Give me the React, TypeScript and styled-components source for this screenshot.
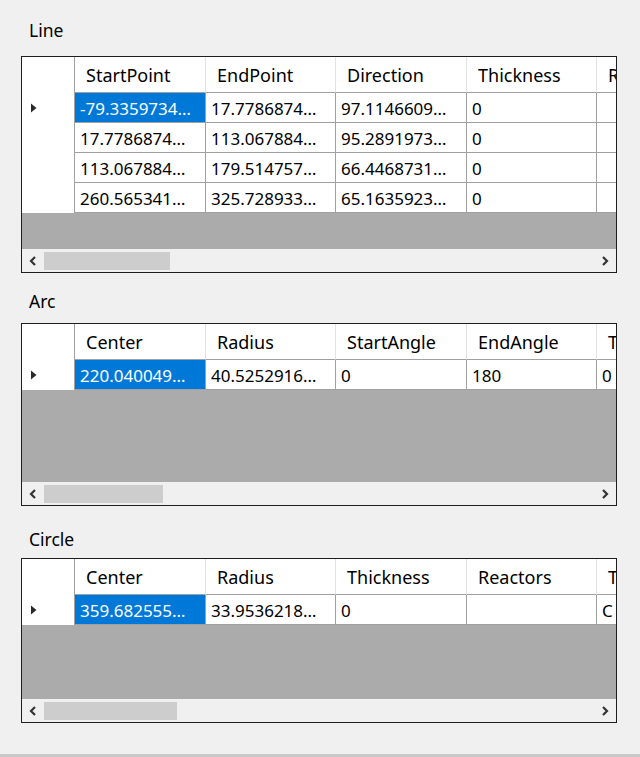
import React from 'react';
import styled, { createGlobalStyle } from 'styled-components';

const GlobalStyle = createGlobalStyle`
  html, body {
    margin: 0;
    padding: 0;
    background: #f0f0f0;
  }
  body {
    font-family: 'Noto Sans', 'Open Sans', Arial, sans-serif;
    color: #000;
  }
`;

type Table = {
  title: string;
  columns: string[];
  rows: string[][];
  emptyHeight: number;
  thumbWidth: number;
  top: number;
  gap: number;
};

const widths = [131, 130, 131, 130, 40];

const tables: Table[] = [
  {
    title: 'Line',
    columns: ['StartPoint', 'EndPoint', 'Direction', 'Thickness', 'R'],
    rows: [
      ['-79.3359734…', '17.7786874…', '97.1146609…', '0', ''],
      ['17.7786874…', '113.067884…', '95.2891973…', '0', ''],
      ['113.067884…', '179.514757…', '66.4468731…', '0', ''],
      ['260.565341…', '325.728933…', '65.1635923…', '0', ''],
    ],
    emptyHeight: 36,
    thumbWidth: 126,
    top: 18,
    gap: 14,
  },
  {
    title: 'Arc',
    columns: ['Center', 'Radius', 'StartAngle', 'EndAngle', 'T'],
    rows: [['220.040049…', '40.5252916…', '0', '180', '0']],
    emptyHeight: 92,
    thumbWidth: 119,
    top: 16,
    gap: 10,
  },
  {
    title: 'Circle',
    columns: ['Center', 'Radius', 'Thickness', 'Reactors', 'T'],
    rows: [['359.682555…', '33.9536218…', '0', '', 'C']],
    emptyHeight: 74,
    thumbWidth: 133,
    top: 21,
    gap: 7,
  },
];

const RowArrow = () => (
  <svg width="6" height="10" viewBox="0 0 6 10">
    <polygon points="0,0.5 5.5,5 0,9.5" fill="#2a2a2a" />
  </svg>
);

const Chevron = ({ dir }: { dir: 'left' | 'right' }) => (
  <svg width="8" height="10" viewBox="0 0 8 10">
    <polyline
      points={dir === 'left' ? '6,1 2,5 6,9' : '2,1 6,5 2,9'}
      fill="none"
      stroke="#333"
      strokeWidth="2.2"
    />
  </svg>
);

const App = () => {
  return (
    <>
      <GlobalStyle />
      <Page>
        <Main>
          {tables.map((t) => (
            <Section key={t.title} $top={t.top}>
              <Label $gap={t.gap}>{t.title}</Label>
              <Grid>
                <Row>
                  <RowHeader />
                  {t.columns.map((c, i) => (
                    <HeaderCell key={c} style={{ width: widths[i] }}>
                      {c}
                    </HeaderCell>
                  ))}
                </Row>
                {t.rows.map((r, ri) => (
                  <Row key={ri}>
                    <RowHeader>{ri === 0 && <RowArrow />}</RowHeader>
                    {r.map((v, ci) => (
                      <Cell
                        key={ci}
                        $selected={ri === 0 && ci === 0}
                        style={{ width: widths[ci] }}
                      >
                        {v}
                      </Cell>
                    ))}
                  </Row>
                ))}
                <Empty style={{ height: t.emptyHeight }} />
                <ScrollBar>
                  <ScrollButton>
                    <Chevron dir="left" />
                  </ScrollButton>
                  <Track>
                    <Thumb style={{ width: t.thumbWidth }} />
                  </Track>
                  <ScrollButton>
                    <Chevron dir="right" />
                  </ScrollButton>
                </ScrollBar>
              </Grid>
            </Section>
          ))}
        </Main>
        <BottomEdge />
      </Page>
    </>
  );
};

export default App;

const Page = styled.div`
  min-height: 757px;
  display: flex;
  flex-direction: column;
`;

const Main = styled.div`
  flex: 1;
  padding-left: 21px;
`;

const Section = styled.div<{ $top: number }>`
  margin-top: ${(p) => p.$top}px;
`;

const Label = styled.div<{ $gap: number }>`
  font-size: 17.5px;
  line-height: 24px;
  height: 24px;
  padding-left: 8px;
  margin-bottom: ${(p) => p.$gap}px;
  color: #000;
`;

const Grid = styled.div`
  width: 594px;
  border: 1px solid #1e1e1e;
  background: #ababab;
  overflow: hidden;
  display: flex;
  flex-direction: column;
`;

const Row = styled.div`
  display: flex;
  flex-shrink: 0;
  background: #fff;
  white-space: nowrap;
`;

const RowHeader = styled.div`
  width: 53px;
  flex-shrink: 0;
  box-sizing: border-box;
  border-right: 1px solid #a0a0a0;
  background: #fff;
  display: flex;
  align-items: center;
  padding-left: 9px;
`;

const HeaderCell = styled.div`
  flex-shrink: 0;
  box-sizing: border-box;
  height: 36px;
  padding: 2px 0 0 11px;
  line-height: 33px;
  font-size: 18px;
  border-right: 1px solid #e3e3e3;
  border-bottom: 1px solid #a0a0a0;
  overflow: hidden;
  color: #000;
`;

const Cell = styled.div<{ $selected?: boolean }>`
  flex-shrink: 0;
  box-sizing: border-box;
  height: 30px;
  padding: 2px 0 0 5px;
  line-height: 27px;
  font-size: 17px;
  border-right: 1px solid #a0a0a0;
  border-bottom: 1px solid #a0a0a0;
  overflow: hidden;
  background: ${(p) => (p.$selected ? '#0078d7' : '#fff')};
  color: ${(p) => (p.$selected ? '#fff' : '#000')};
`;

const Empty = styled.div`
  flex-shrink: 0;
  background: #ababab;
`;

const ScrollBar = styled.div`
  height: 23px;
  display: flex;
  align-items: center;
  background: #f0f0f0;
`;

const ScrollButton = styled.div`
  width: 22px;
  height: 23px;
  display: flex;
  align-items: center;
  justify-content: center;
  flex-shrink: 0;
`;

const Track = styled.div`
  flex: 1;
  height: 18px;
`;

const Thumb = styled.div`
  height: 18px;
  background: #cdcdcd;
`;

const BottomEdge = styled.div`
  height: 3px;
  background: #c9c9c9;
`;
